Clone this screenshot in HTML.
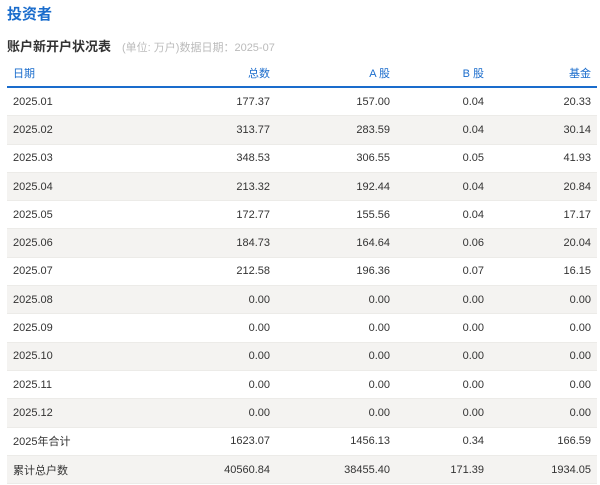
<!DOCTYPE html><html><head><meta charset="utf-8"><style>
body{margin:0;width:600px;height:485px;background:#fff;font-family:"Liberation Sans","Noto Sans CJK SC",sans-serif;overflow:hidden}
.t{position:absolute;left:7px;top:3px;font-size:15px;font-weight:bold;color:#1a6ccc}
.s{position:absolute;left:7px;top:36px;font-size:13px;font-weight:bold;color:#333}
.s span{font-weight:normal;font-size:11px;color:#bbb;margin-left:11px}
table{position:absolute;left:7px;top:60px;width:590px;border-collapse:collapse;font-size:11px;color:#333;table-layout:fixed}
th{font-weight:normal;color:#1a6ccc;height:26px;border-bottom:2px solid #1a6ccc;text-align:right;padding:0 6px}
td{height:27.3px;border-bottom:1px solid #ecebe8;text-align:right;padding:0 6px}
th:first-child,td:first-child{text-align:left}
tr:nth-child(odd) td{background:#f4f3f1}
</style></head><body>
<div class="t">投资者</div>
<div class="s">账户新开户状况表<span>(单位: 万户)数据日期：2025-07</span></div>
<table>
<colgroup><col style="width:130px"><col style="width:139px"><col style="width:120px"><col style="width:94px"><col style="width:107px"></colgroup>
<tr><th>日期</th><th>总数</th><th>A 股</th><th>B 股</th><th>基金</th></tr>
<tr><td>2025.01</td><td>177.37</td><td>157.00</td><td>0.04</td><td>20.33</td></tr>
<tr><td>2025.02</td><td>313.77</td><td>283.59</td><td>0.04</td><td>30.14</td></tr>
<tr><td>2025.03</td><td>348.53</td><td>306.55</td><td>0.05</td><td>41.93</td></tr>
<tr><td>2025.04</td><td>213.32</td><td>192.44</td><td>0.04</td><td>20.84</td></tr>
<tr><td>2025.05</td><td>172.77</td><td>155.56</td><td>0.04</td><td>17.17</td></tr>
<tr><td>2025.06</td><td>184.73</td><td>164.64</td><td>0.06</td><td>20.04</td></tr>
<tr><td>2025.07</td><td>212.58</td><td>196.36</td><td>0.07</td><td>16.15</td></tr>
<tr><td>2025.08</td><td>0.00</td><td>0.00</td><td>0.00</td><td>0.00</td></tr>
<tr><td>2025.09</td><td>0.00</td><td>0.00</td><td>0.00</td><td>0.00</td></tr>
<tr><td>2025.10</td><td>0.00</td><td>0.00</td><td>0.00</td><td>0.00</td></tr>
<tr><td>2025.11</td><td>0.00</td><td>0.00</td><td>0.00</td><td>0.00</td></tr>
<tr><td>2025.12</td><td>0.00</td><td>0.00</td><td>0.00</td><td>0.00</td></tr>
<tr><td>2025年合计</td><td>1623.07</td><td>1456.13</td><td>0.34</td><td>166.59</td></tr>
<tr><td>累计总户数</td><td>40560.84</td><td>38455.40</td><td>171.39</td><td>1934.05</td></tr>
</table>
</body></html>
